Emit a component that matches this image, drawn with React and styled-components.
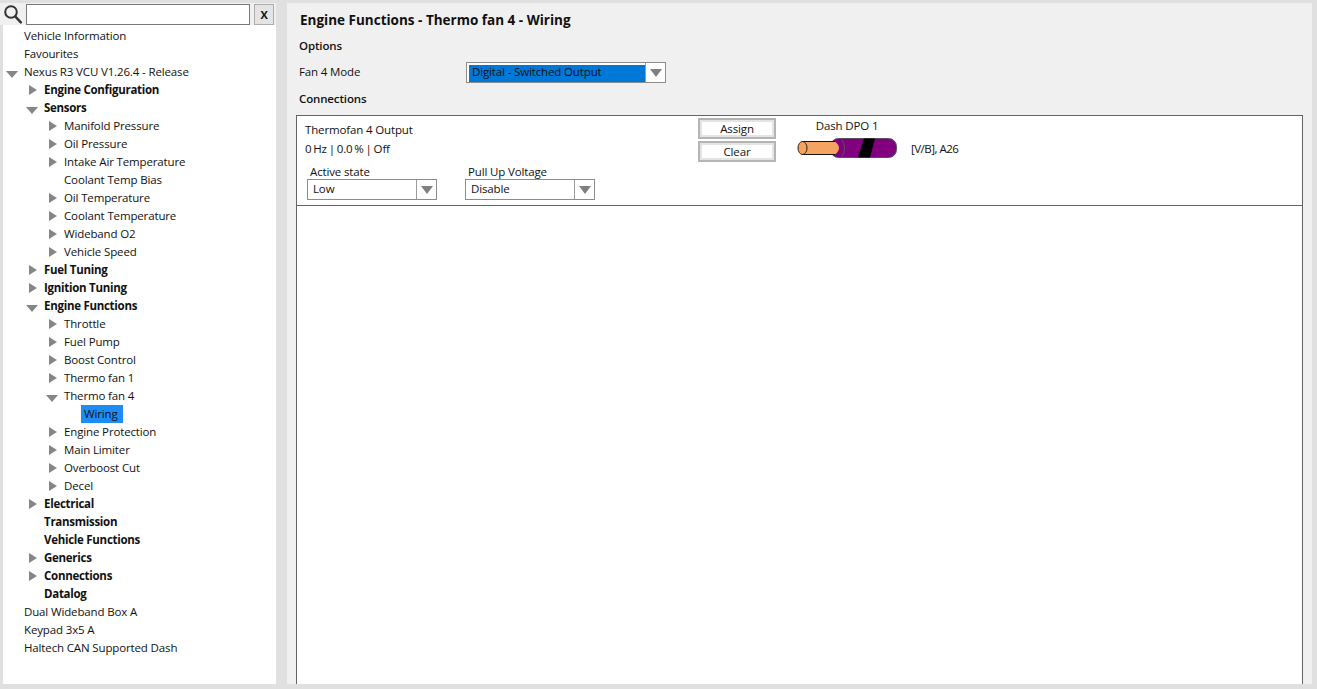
import React from 'react';
import styled, { createGlobalStyle } from 'styled-components';

const treeItems = [
  { label: 'Vehicle Information', depth: 0 },
  { label: 'Favourites', depth: 0 },
  { label: 'Nexus R3 VCU V1.26.4 - Release', depth: 0, arrow: 'open' },
  { label: 'Engine Configuration', depth: 1, arrow: 'closed', bold: true },
  { label: 'Sensors', depth: 1, arrow: 'open', bold: true },
  { label: 'Manifold Pressure', depth: 2, arrow: 'closed' },
  { label: 'Oil Pressure', depth: 2, arrow: 'closed' },
  { label: 'Intake Air Temperature', depth: 2, arrow: 'closed' },
  { label: 'Coolant Temp Bias', depth: 2 },
  { label: 'Oil Temperature', depth: 2, arrow: 'closed' },
  { label: 'Coolant Temperature', depth: 2, arrow: 'closed' },
  { label: 'Wideband O2', depth: 2, arrow: 'closed' },
  { label: 'Vehicle Speed', depth: 2, arrow: 'closed' },
  { label: 'Fuel Tuning', depth: 1, arrow: 'closed', bold: true },
  { label: 'Ignition Tuning', depth: 1, arrow: 'closed', bold: true },
  { label: 'Engine Functions', depth: 1, arrow: 'open', bold: true },
  { label: 'Throttle', depth: 2, arrow: 'closed' },
  { label: 'Fuel Pump', depth: 2, arrow: 'closed' },
  { label: 'Boost Control', depth: 2, arrow: 'closed' },
  { label: 'Thermo fan 1', depth: 2, arrow: 'closed' },
  { label: 'Thermo fan 4', depth: 2, arrow: 'open' },
  { label: 'Wiring', depth: 3, selected: true },
  { label: 'Engine Protection', depth: 2, arrow: 'closed' },
  { label: 'Main Limiter', depth: 2, arrow: 'closed' },
  { label: 'Overboost Cut', depth: 2, arrow: 'closed' },
  { label: 'Decel', depth: 2, arrow: 'closed' },
  { label: 'Electrical', depth: 1, arrow: 'closed', bold: true },
  { label: 'Transmission', depth: 1, bold: true },
  { label: 'Vehicle Functions', depth: 1, bold: true },
  { label: 'Generics', depth: 1, arrow: 'closed', bold: true },
  { label: 'Connections', depth: 1, arrow: 'closed', bold: true },
  { label: 'Datalog', depth: 1, bold: true },
  { label: 'Dual Wideband Box A', depth: 0 },
  { label: 'Keypad 3x5 A', depth: 0 },
  { label: 'Haltech CAN Supported Dash', depth: 0 },
];

const GlobalStyle = createGlobalStyle`
  html, body {
    margin: 0;
    height: 100%;
    overflow: hidden;
  }
  #root {
    height: 100%;
  }
  body {
    font-family: "Open Sans", "Noto Sans", sans-serif;
    font-size: 11.5px;
    letter-spacing: -0.14px;
    color: #111;
  }
`;

const Shell = styled.div`
  display: flex;
  gap: 11px;
  box-sizing: border-box;
  height: 689px;
  padding: 3px 5px 5px 3px;
  background: #e0e0e0;
`;

const Sidebar = styled.aside`
  display: flex;
  flex-direction: column;
  width: 273px;
  flex: none;
`;

const SearchBar = styled.div`
  display: flex;
  align-items: center;
  height: 22px;
  margin-left: -3px;
  padding-left: 3px;
  background: #f0f0f0;
`;

const SearchIcon = styled.svg`
  width: 20px;
  height: 20px;
  margin-right: 3px;
  flex: none;
`;

const SearchInput = styled.div`
  box-sizing: border-box;
  width: 224px;
  height: 21px;
  background: #fff;
  border: 1px solid #7a7a7a;
`;

const ClearSearch = styled.div`
  box-sizing: border-box;
  width: 20px;
  height: 21px;
  margin-left: 4px;
  background: #e4e4e4;
  border: 1px solid #adadad;
  font-weight: 700;
  font-size: 11px;
  line-height: 19px;
  text-align: center;
`;

const Tree = styled.div`
  flex: 1;
  background: #fff;
  padding-top: 2px;
`;

const Row = styled.div`
  display: flex;
  align-items: center;
  height: 18px;
  padding-left: ${p => p.$depth * 20 + 1}px;
  white-space: nowrap;
`;

const ArrowCell = styled.span`
  display: flex;
  align-items: center;
  width: 20px;
  height: 18px;
  flex: none;
`;

const ClosedArrow = styled.span`
  width: 0;
  height: 0;
  margin-left: 5px;
  border-top: 5.5px solid transparent;
  border-bottom: 5.5px solid transparent;
  border-left: 8px solid #868686;
`;

const OpenArrow = styled.span`
  width: 0;
  height: 0;
  margin-top: 5px;
  margin-left: 2px;
  border-left: 6px solid transparent;
  border-right: 6px solid transparent;
  border-top: 7px solid #868686;
`;

const RowText = styled.span`
  font-weight: ${p => (p.$bold ? 700 : 400)};
  letter-spacing: ${p => (p.$bold ? '-0.28px' : 'inherit')};
  transform: translateY(-1px);
  ${p => p.$selected && 'background: #1e8cf5; padding: 0 5px 0 3px; margin-left: -3px; line-height: 18px; transform: none;'}
`;

const Main = styled.main`
  flex: 1;
  display: flex;
  flex-direction: column;
  min-width: 0;
  padding: 0 9px;
  background: #f0f0f0;
`;

const PageTitle = styled.h1`
  margin: 9px 0 0 4px;
  font-size: 13.5px;
  font-weight: 700;
  line-height: 16px;
  letter-spacing: 0;
`;

const SectionLabel = styled.div`
  margin: ${p => p.$top}px 0 0 3px;
  font-weight: 600;
  line-height: 16px;
`;

const ModeRow = styled.div`
  display: flex;
  align-items: center;
  margin-top: 8px;
  margin-left: 3px;
  height: 21px;
`;

const ModeLabel = styled.span`
  width: 167px;
  padding-bottom: 2px;
`;

const SelectBox = styled.div`
  display: flex;
  box-sizing: border-box;
  width: ${p => p.$width}px;
  height: 21px;
  background: #fff;
  border: 1px solid #8c8c8c;
`;

const SelectValue = styled.div`
  flex: 1;
  margin: ${p => (p.$highlight ? '2px 0 0 2px' : '0')};
  padding-left: ${p => (p.$highlight ? '3px' : '5px')};
  background: ${p => (p.$highlight ? '#0078d7' : 'transparent')};
  line-height: ${p => (p.$highlight ? '14px' : '17px')};
  white-space: nowrap;
`;

const SelectButton = styled.div`
  display: flex;
  align-items: center;
  justify-content: center;
  width: 19px;
  flex: none;
  border-left: 1px solid #9c9c9c;
  &::after {
    content: '';
    border-left: 6px solid transparent;
    border-right: 6px solid transparent;
    border-top: 8px solid #808080;
  }
`;

const GroupBox = styled.section`
  flex: 1;
  margin-top: 8px;
  background: #fff;
  border: 1px solid #646464;
  border-bottom: none;
`;

const OutputPanel = styled.div`
  display: flex;
  align-items: flex-start;
  box-sizing: border-box;
  height: 90px;
  border-bottom: 1px solid #646464;
`;

const OutputInfo = styled.div`
  width: 401px;
  flex: none;
`;

const OutputName = styled.div`
  margin: 6px 0 0 8px;
  line-height: 16px;
`;

const OutputStatus = styled.div`
  margin: 3px 0 0 8px;
  line-height: 16px;
  word-spacing: -1px;
`;

const OptionRow = styled.div`
  display: flex;
  gap: 28px;
  margin: 8px 0 0 10px;
`;

const OptionField = styled.div`
  display: flex;
  flex-direction: column;
`;

const OptionLabel = styled.div`
  margin-left: 3px;
  line-height: 14px;
`;

const ButtonStack = styled.div`
  display: flex;
  flex-direction: column;
  gap: 2px;
  margin-top: 2px;
`;

const ActionButton = styled.div`
  box-sizing: border-box;
  width: 78px;
  height: 21px;
  background: #fff;
  border: 2px solid #b4b4b4;
  box-shadow: inset 0 0 0 2px #e4e4e4;
  line-height: 17px;
  text-align: center;
`;

const WireColumn = styled.div`
  display: flex;
  flex-direction: column;
  align-items: center;
  width: 100px;
  margin-left: 21px;
`;

const WireTitle = styled.div`
  margin-top: 2px;
  line-height: 16px;
`;

const WireDrawing = styled.svg`
  width: 100px;
  height: 20px;
  margin-top: 4px;
`;

const PinText = styled.div`
  margin: 25px 0 0 14px;
  line-height: 16px;
  letter-spacing: -0.5px;
`;

function Select({ value, width, highlight }) {
  return (
    <SelectBox $width={width}>
      <SelectValue $highlight={highlight}>{value}</SelectValue>
      <SelectButton />
    </SelectBox>
  );
}

function TreeRow({ item }) {
  return (
    <Row $depth={item.depth}>
      <ArrowCell>
        {item.arrow === 'open' && <OpenArrow />}
        {item.arrow === 'closed' && <ClosedArrow />}
      </ArrowCell>
      <RowText $bold={item.bold} $selected={item.selected}>{item.label}</RowText>
    </Row>
  );
}

export default function App() {
  return (
    <>
      <GlobalStyle />
      <Shell>
        <Sidebar>
          <SearchBar>
            <SearchIcon viewBox="0 0 20 20">
              <circle cx="8" cy="8" r="5.8" fill="none" stroke="#333" strokeWidth="2" />
              <path d="M12.2 12.4l5.6 6" stroke="#333" strokeWidth="2.4" strokeLinecap="round" />
            </SearchIcon>
            <SearchInput />
            <ClearSearch>X</ClearSearch>
          </SearchBar>
          <Tree>
            {treeItems.map(item => <TreeRow key={item.label} item={item} />)}
          </Tree>
        </Sidebar>
        <Main>
          <PageTitle>Engine Functions - Thermo fan 4 - Wiring</PageTitle>
          <SectionLabel $top={10}>Options</SectionLabel>
          <ModeRow>
            <ModeLabel>Fan 4 Mode</ModeLabel>
            <Select value="Digital - Switched Output" width={200} highlight />
          </ModeRow>
          <SectionLabel $top={8}>Connections</SectionLabel>
          <GroupBox>
            <OutputPanel>
              <OutputInfo>
                <OutputName>Thermofan 4 Output</OutputName>
                <OutputStatus>0 Hz | 0.0 % | Off</OutputStatus>
                <OptionRow>
                  <OptionField>
                    <OptionLabel>Active state</OptionLabel>
                    <Select value="Low" width={130} />
                  </OptionField>
                  <OptionField>
                    <OptionLabel>Pull Up Voltage</OptionLabel>
                    <Select value="Disable" width={130} />
                  </OptionField>
                </OptionRow>
              </OutputInfo>
              <ButtonStack>
                <ActionButton>Assign</ActionButton>
                <ActionButton>Clear</ActionButton>
              </ButtonStack>
              <WireColumn>
                <WireTitle>Dash DPO 1</WireTitle>
                <WireDrawing viewBox="0 0 100 20">
                  <rect x="33.5" y="0.5" width="66" height="19" rx="8" fill="#800080" stroke="#5f4a5f" />
                  <path d="M61 19.5L67 0.5H78L73 19.5Z" fill="#000" />
                  <path d="M45 1.5Q50 10 45 18.5" fill="none" stroke="#5f4a5f" />
                  <path d="M5 3.5H38Q46 10 38 16.5H5Z" fill="#f4a460" />
                  <path d="M5 3.5H38M5 16.5H38" stroke="#111" />
                  <ellipse cx="5.5" cy="10" rx="4.5" ry="6.5" fill="#f4a460" stroke="#222" />
                </WireDrawing>
              </WireColumn>
              <PinText>[V/B], A26</PinText>
            </OutputPanel>
          </GroupBox>
        </Main>
      </Shell>
    </>
  );
}
